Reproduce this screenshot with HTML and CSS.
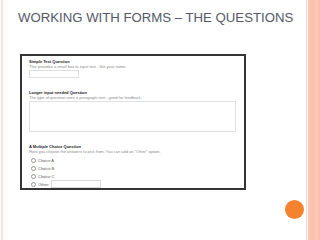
FILE: index.html
```html
<!DOCTYPE html>
<html>
<head>
<meta charset="utf-8">
<link rel="stylesheet" href="styles.css">
</head>
<body>
<div class="slide">
  <div class="edge-left"></div>
  <div class="content">
    <h1 class="title">WORKING WITH FORMS – THE QUESTIONS</h1>
    <div class="form">
      <div class="question">
        <div class="q-title">Simple Text Question</div>
        <div class="q-desc">This provides a small box to input text - like your name.</div>
        <div class="text-input"></div>
      </div>
      <div class="question">
        <div class="q-title">Longer input needed Question</div>
        <div class="q-desc">The type of question uses a paragraph text - good for feedback.</div>
        <div class="textarea"></div>
      </div>
      <div class="question">
        <div class="q-title">A Multiple Choice Question</div>
        <div class="q-desc">Here you choose the answers to pick from. You can add an "Other" option.</div>
        <div class="choices">
          <div class="choice"><span class="radio"></span><span>Choice A</span></div>
          <div class="choice"><span class="radio"></span><span>Choice B</span></div>
          <div class="choice"><span class="radio"></span><span>Choice C</span></div>
          <div class="choice"><span class="radio"></span><span>Other:</span><span class="other-input"></span></div>
        </div>
      </div>
    </div>
  </div>
  <div class="edge-right">
    <div class="edge-line"></div>
    <div class="edge-band"></div>
  </div>
  <div class="dot"></div>
</div>
</body>
</html>
```

FILE: styles.css
```css
html, body {
  margin: 0;
  padding: 0;
  background: #ffffff;
}
.slide {
  position: relative;
  width: 320px;
  height: 240px;
  display: flex;
  overflow: hidden;
  font-family: "Liberation Sans", Arial, sans-serif;
}
.edge-left {
  width: 2px;
  margin-left: 1px;
  background: #f6e3dc;
}
.content {
  flex: 1;
  padding-left: 15px;
}
.title {
  margin: 0;
  padding-top: 10px;
  font-size: 13.2px;
  font-weight: normal;
  color: #535866;
  line-height: 16px;
  white-space: nowrap;
}
.form {
  margin-top: 28px;
  margin-left: 2px;
  width: 210px;
  height: 127px;
  border: 2px solid #353535;
  padding: 3px 5px 2px 7px;
  font-size: 4px;
  line-height: 5px;
}
.question {
  margin-bottom: 12px;
}
.q-title {
  font-weight: bold;
  color: #222;
}
.q-desc {
  color: #8a8a8a;
}
.text-input {
  width: 48px;
  height: 6px;
  border: 1px solid #e0e0e0;
  margin-top: 1px;
}
.textarea {
  width: 205px;
  height: 29px;
  border: 1px solid #e0e0e0;
  margin-top: 1px;
}
.choices {
  margin-top: 2px;
}
.choice {
  display: flex;
  align-items: center;
  gap: 2px;
  height: 8px;
  color: #555;
}
.radio {
  width: 3px;
  height: 3px;
  border: 1px solid #999;
  border-radius: 50%;
  margin-left: 2px;
}
.other-input {
  width: 48px;
  height: 6px;
  border: 1px solid #d8d8d8;
}
.edge-right {
  display: flex;
  width: 14px;
}
.edge-line {
  width: 1px;
  background: #f8d4c6;
  margin-right: 1px;
}
.edge-band {
  flex: 1;
  background: linear-gradient(90deg, #fbc8b4 0, #f9c0aa 40%, #fbcbb8 70%, #f8bea8 100%);
}
.dot {
  position: absolute;
  left: 285px;
  top: 200px;
  width: 19px;
  height: 19px;
  border-radius: 50%;
  background: #f5822f;
}
```
